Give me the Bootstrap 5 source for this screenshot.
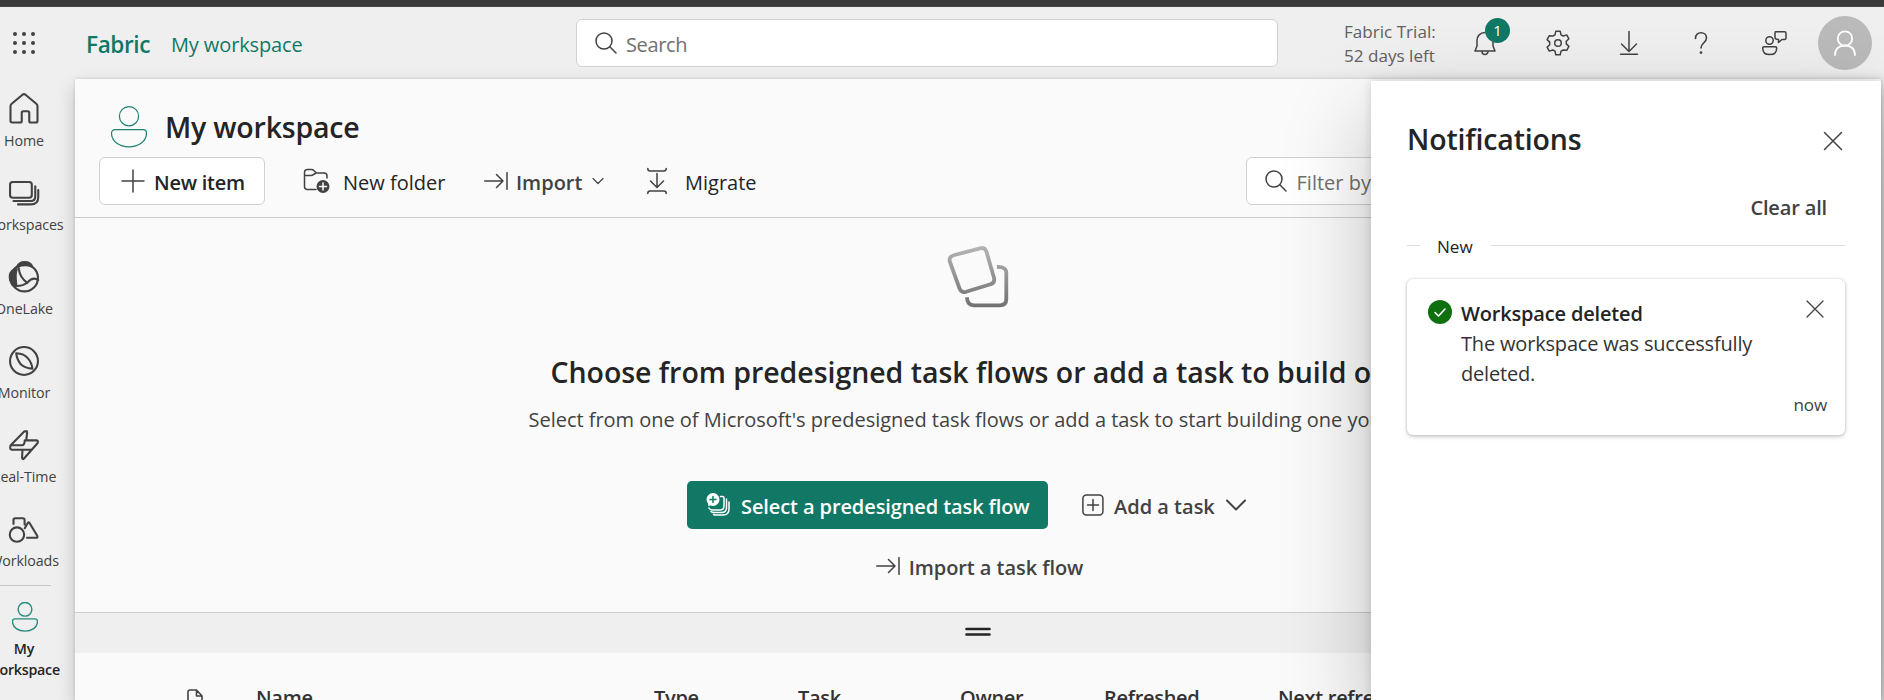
<!DOCTYPE html>
<html lang="en">
<head>
<meta charset="utf-8">
<title>My workspace - Fabric</title>
<link rel="stylesheet" href="https://cdn.jsdelivr.net/npm/bootstrap@5.3.0/dist/css/bootstrap.min.css">
<script src="https://cdn.jsdelivr.net/npm/bootstrap@5.3.0/dist/js/bootstrap.bundle.min.js"></script>
<style>
:root{--brand:#117865;--ink:#242424;--ink2:#424242;--line:#d1d1d1}
body{font-family:"Open Sans","Noto Sans",sans-serif;font-size:20px;line-height:30px;color:var(--ink);background:#efefef;height:700px;overflow:hidden;white-space:nowrap}
svg{display:block;flex:none;fill:none;stroke:var(--ink2);stroke-linecap:round;stroke-linejoin:round;overflow:visible}
.topline{height:7px;background:#3b3b3b;border-bottom:1px solid #484644}
.apphead{height:72px}
.semi{font-weight:600}
.teal{color:var(--brand)}
.waffle{width:48px;padding-left:13px}
.brand-name{margin-left:38px;width:85px;font-size:22.6px;letter-spacing:-.4px}
.crumb{letter-spacing:-.12px;width:405px}
.field{height:48px;background:#fff;border:1px solid var(--line);border-radius:6px;color:#707070}
.search{width:702px;padding-left:18px;letter-spacing:-.35px}
.trial{margin-left:66px;width:118px;font-size:17.1px;line-height:24px;color:#616161;padding-top:1px}
.tool{width:72px}
.count{left:25px;top:-12px;width:25px;height:25px;border-radius:50%;background:var(--brand);color:#fff;font-size:15px;line-height:25px}
.avatar{width:54px;height:54px;background:#bababa;margin-left:9px}
.side{width:75px}
.side-item{width:48px;height:84px;padding-top:12px;font-size:14.25px;line-height:21px;color:var(--ink2);letter-spacing:-.1px}
.side-item svg{margin-bottom:3px;stroke-width:1.4}
.side-rule{width:51px;height:1px;background:#c8c8c8;margin-top:2px}
.pane{background:#fafafa;margin-right:3px;box-shadow:0 0 3px rgba(0,0,0,.14),0 8px 18px rgba(0,0,0,.2)}
.title-row{height:78px;padding:27px 0 0 36px}
.title-text{font-size:28.5px;line-height:42px;letter-spacing:-.2px;margin:0 0 0 18px}
.tools{height:61px;padding:0 0 12px 24px;border-bottom:1px solid #cdcdcd}
.newitem{width:166px;height:48px;background:#fff;border:1px solid var(--line);border-radius:6px;padding-left:21px;letter-spacing:-.25px}
.filter{width:300px;margin-left:489px;padding-left:18px}
.drop{padding-top:3px}
.flow{height:395px;border-bottom:1px solid #cdcdcd}
.flow h2{font-size:28.5px;line-height:42px;letter-spacing:-.04px}
.sub{color:var(--ink2);letter-spacing:-.03px}
.cta{height:48px;width:361px;background:var(--brand);color:#fff;border-radius:5px;padding-left:19px;letter-spacing:-.1px}
.splitter{height:40px;background:#efefef}
.cols{height:60px;padding:30px 0 0 112px;color:#333;letter-spacing:-.3px}
.panel{left:1371px;top:81px;width:510px;height:619px;background:#fff;box-shadow:0 0 10px rgba(0,0,0,.14),0 36px 84px rgba(0,0,0,.24);padding:37px 36px 0}
.note{height:156px;border-radius:6px;background:#fff;box-shadow:0 0 3px rgba(0,0,0,.18),0 2px 4px rgba(0,0,0,.18);margin-top:20px;padding:20px 18px 0 21px}
.rule{height:1px;background:#dcdcdc}
.small-t{font-size:17.1px;line-height:24px}
</style>
</head>
<body class="position-relative">
<svg width="0" height="0" class="position-absolute" aria-hidden="true">
  <symbol id="person" viewBox="0 0 36 42"><circle cx="18" cy="10.2" r="9.6"/><path d="M4 23.6h28a3.5 3.5 0 0 1 3.500 3.500C35.500 36 27 40.800 18 40.800S.5 36 .5 27.100A3.500 3.500 0 0 1 4 23.600z"/></symbol>
  <symbol id="glass" viewBox="0 0 22 22"><circle cx="9" cy="9" r="8"/><path d="M14.800 14.800 21 21"/></symbol>
  <symbol id="import" viewBox="0 0 24 18"><path d="M.7 9H19M12.500 2.500 19 9l-6.500 6.500M23 .7v16.600"/></symbol>
</svg>
<div class="topline"></div>
<header class="apphead d-flex align-items-center">
  <div class="waffle"><svg width="24" height="24" style="fill:#424242;stroke:none"><g id="dots"><circle cx="2" cy="3" r="2"/><circle cx="11" cy="3" r="2"/><circle cx="20" cy="3" r="2"/></g><use href="#dots" y="9"/><use href="#dots" y="18"/></svg></div>
  <div class="brand-name semi teal pt-1">Fabric</div>
  <div class="crumb teal pt-1">My workspace</div>
  <div class="field search d-flex align-items-center"><svg width="22" height="22" stroke-width="1.500"><use href="#glass"/></svg><span class="ps-2 pt-1" style="margin-left:1px">Search</span></div>
  <div class="trial">Fabric Trial:<br>52 days left</div>
  <div class="tool position-relative" style="width:83px;padding-left:12px">
    <svg width="24" height="26" stroke-width="1.500"><path d="M11 2.500c-5 0-8 3.700-8 8v5.500L1 21h20l-2-5v-5M8 21.500a3 3 0 0 0 6 0"/></svg>
    <span class="count position-absolute text-center" style="left:23px">1</span>
  </div>
  <div class="tool"><svg width="26" height="26" viewBox="-13 -13 26 26" stroke-width="1.500"><circle r="3.300"/><path d="M-2.200-11.800h4.400l.8 3.600 2.200 1.200 3.500-1.100 2.200 3.900-2.600 2.500v2.600l2.600 2.500-2.200 3.900L5.200 7 3 8.200l-.8 3.600h-4.400L-3 8.200-5.200 7l-3.500 1.100-2.200-3.900 2.600-2.500v-2.600l-2.600-2.500 2.200-3.900L-5.200-7-3-8.200z"/></svg></div>
  <div class="tool"><svg width="24" height="24" stroke-width="1.500"><path d="M12 .5V20M4.500 13l7.500 7.500 7.500-7.500M3.500 23.300h17"/></svg></div>
  <div class="tool"><svg width="24" height="24" stroke-width="1.600"><path d="M6.500 7.500C6.500 3.500 9 1.800 12 1.800s5.500 2 5.500 5.200c0 4.500-5.500 5-5.500 10"/><circle cx="12" cy="21.600" r=".6"/></svg></div>
  <div class="tool" style="width:48px"><svg width="26" height="26" stroke-width="1.500"><circle cx="8.500" cy="10.500" r="3.700"/><path d="M3 16.800h11.500q1.200 0 1.200 1.200c0 4.500-3 6.600-7 6.600s-7-2.100-7-6.600q0-1.200 1.300-1.200zM14.500 1.800h9q1.500 0 1.500 1.500V8q0 1.500-1.500 1.500H21l-3.500 3v-3q-3.500 0-3.500-2V3.300q0-1.500.5-1.500z"/></svg></div>
  <div class="avatar rounded-circle d-flex align-items-center justify-content-center"><svg width="24" height="26" style="stroke:#fff" stroke-width="1.800"><circle cx="12" cy="8.500" r="7.200"/><path d="M2 25c0-6 4-9.500 10-9.500S22 19 22 25"/></svg></div>
</header>

<div class="d-flex" style="height:621px">
  <nav class="side flex-shrink-0">
    <div class="side-item d-flex flex-column align-items-center"><svg width="36" height="36" viewBox="0 0 24 24"><path d="M3 10.200Q3 9.200 3.800 8.500l7.200-6q1-.8 2 0l7.200 6q.8.700.8 1.700V20q0 1-1 1h-3.500q-1 0-1-1v-5.500q0-1-1-1h-3q-1 0-1 1V20q0 1-1 1H4q-1 0-1-1z"/></svg>Home</div>
    <div class="side-item d-flex flex-column align-items-center"><svg width="36" height="36" viewBox="0 0 24 24"><rect x="2.700" y="4.700" width="14.500" height="10.500" rx="1.800"/><path d="M5 17.300h11.500q3 0 3-3V7.500M8 19.600h8.500q5 0 5-5V10"/></svg>Workspaces</div>
    <div class="side-item d-flex flex-column align-items-center"><svg width="36" height="36" viewBox="0 0 24 24"><circle cx="12.300" cy="12.600" r="9"/><path d="M7.500 5.200Q8.500 2 12.500 2t5 3.200q-4-2-10 0zM6.500 6.500Q1.500 8.500 2.700 14q.8 3 3 4.500 1.500-1 1-3Q6 10 7.200 6.800z" fill="#424242"/><path d="M8.500 6c.3 4.500 3 8 5.800 10M7 18q4.500 0 7.500-2.500Q18 11.500 21.500 14"/></svg>OneLake</div>
    <div class="side-item d-flex flex-column align-items-center"><svg width="36" height="36" viewBox="0 0 24 24"><circle cx="12" cy="12" r="9.300"/><path d="M6.800 6.800q5.400.2 7.700 3.300 2.700 3 3.100 7.100-4.800-.5-7.600-2.900-2.700-3-3.200-7.500z"/></svg>Monitor</div>
    <div class="side-item d-flex flex-column align-items-center"><svg width="36" height="36" viewBox="0 0 24 24"><path d="M12.300 2.900 3 12.300q-.8 2.700 1 2.900h7l-.3 5.300q.3 1.500 1.300.5l9-10.200q.8-1.700-.7-1.900h-6.800l.6-5.300q-.2-1.300-.8-.7zM4 12.200h6.500q2 0 2-3.300M11 15.200h5.500"/></svg>Real-Time</div>
    <div class="side-item d-flex flex-column align-items-center"><svg width="36" height="36" viewBox="0 0 24 24"><circle cx="7.300" cy="15.700" r="4.800"/><path d="M5 8.700V6q0-1.200 1.200-1.200h5q1.200 0 1.200 1.200v3M12.500 11.500l2-3.500q.6-.9 1.200 0l5.200 8.700q.4 1.100-.8 1.100H14"/></svg>Workloads</div>
    <div class="side-rule"></div>
    <div class="side-item semi d-flex flex-column align-items-center text-center" style="padding-top:16px;color:#242424"><svg width="26" height="30" style="stroke:#2a8c7b;margin:0 0 6px 1px;stroke-width:2"><use href="#person"/></svg>My<br><span style="letter-spacing:-.25px">workspace</span></div>
  </nav>

  <main class="pane flex-grow-1 overflow-visible">
    <div class="title-row d-flex align-items-start"><svg width="36" height="42" style="stroke:#1d8170" stroke-width="1.200"><use href="#person"/></svg><h1 class="title-text semi">My workspace</h1></div>
    <div class="tools d-flex align-items-center">
      <div class="newitem semi d-flex align-items-center"><svg width="24" height="24" stroke-width="1.500"><path d="M12 1v22M1 12h22"/></svg><span class="drop" style="padding-left:9px">New item</span></div>
      <svg width="28" height="26" stroke-width="1.500" style="margin-left:38px"><path d="M13 21.500H4.500q-3 0-3-3v-14q0-3 3-3h4q1.500 0 2.500 1.200L13.500 5H21q3 0 3 3v2M1.500 7.500H8q1.500 0 2.500-1L13 5"/><circle cx="20" cy="18.500" r="6.500" fill="#424242" stroke="none"/><path d="M20 15v7M16.500 18.500h7" stroke="#fff"/></svg>
      <span class="drop" style="margin-left:12px;width:141px">New folder</span>
      <svg width="24" height="18" stroke-width="1.500"><use href="#import"/></svg>
      <span class="drop semi" style="margin-left:8px;width:76px;color:#424242">Import</span>
      <svg width="12" height="8" stroke-width="1.200"><path d="M1 1.500l5 5 5-5"/></svg>
      <svg width="20" height="26" stroke-width="1.500" style="margin-left:43px"><path d="M.8.5Q.8 3 3 3h14q2.200 0 2.200-2.500M.8 25.500Q.8 23 3 23h14q2.200 0 2.200 2.500M10 5.500V19M3.500 13l6.500 6.500 6.500-6.500"/></svg>
      <span class="drop" style="margin-left:18px">Migrate</span>
      <div class="field filter d-flex align-items-center flex-shrink-0"><svg width="22" height="22" stroke-width="1.500"><use href="#glass"/></svg><span class="drop" style="padding-left:10px">Filter by keyword</span></div>
    </div>
    <section class="flow d-flex flex-column align-items-center">
      <svg width="62" height="62" style="margin-top:28px" stroke-width="3.800" stroke="none"><defs><linearGradient id="g" x1="0" y1="0" x2="0" y2="62" gradientUnits="userSpaceOnUse"><stop stop-color="#b5b5b5"/><stop offset="1" stop-color="#707070"/></linearGradient></defs><g style="stroke:url(#g)"><path d="M7.500 9 33 2.300q5-1.300 6.500 3.500l7.500 26q1.200 5-3.500 6.500L19 45.800q-5 1.300-6.500-3.500L2.800 15.500Q1.500 10.500 7.500 9z"/><path d="M50 21q9.300-.5 9.300 6v26q0 6.300-6.300 6.300H27q-7 0-7-8" stroke-linecap="butt"/></g></svg>
      <h2 class="semi m-0" style="margin-top:43px!important">Choose from predesigned task flows or add a task to build one</h2>
      <div class="sub" style="margin-top:12px">Select from one of Microsoft's predesigned task flows or add a task to start building one yourself.</div>
      <div class="d-flex align-items-center" style="margin-top:46px;width:582px">
        <div class="cta semi d-flex align-items-center"><svg width="26" height="26" style="stroke:#fff" stroke-width="1.500"><path d="M14.500 4.500h2q1.500 0 1.500 1.500v8q0 4-4 4H6q-2 0-3-2M20.500 7v8.500q0 5-5 5H8q-2 0-3-1M23 10v7q0 6-6 6h-7q-1.500 0-2.500-.5M3 12v1.500"/><circle cx="7" cy="7.500" r="6.500" fill="#fff" stroke="none"/><path d="M7 4.500v6M4 7.500h6" stroke="#117865"/></svg><span class="drop" style="padding-left:9px">Select a predesigned task flow</span></div>
        <svg width="22" height="22" stroke-width="1.500" style="margin-left:34px"><rect x=".9" y=".9" width="20" height="20.200" rx="3.500"/><path d="M11 5.500v11M5.500 11h11"/></svg>
        <span class="semi drop" style="margin-left:10px;width:112px;color:#424242">Add a task</span>
        <svg width="20" height="12" stroke-width="2"><path d="M1 1.500l9 9 9-9"/></svg>
      </div>
      <div class="d-flex align-items-center" style="margin:21px 0 0 3px"><svg width="24" height="18" stroke-width="1.500" style="margin-top:-2px"><use href="#import"/></svg><span class="semi drop" style="margin-left:9px;color:#424242;letter-spacing:-.05px">Import a task flow</span></div>
    </section>
    <div class="splitter d-flex justify-content-center"><svg width="26" height="10" style="margin-top:14px;stroke:#242424" stroke-width="2.600"><path d="M1.500 2h23M1.500 7.500h23"/></svg></div>
    <div class="cols d-flex align-items-start semi overflow-hidden">
      <svg width="16" height="22" stroke-width="1.600" style="margin-top:6px"><path d="M3 1h6.500L15 7v12q0 2-2 2H3q-2 0-2-2V3q0-2 2-2zM9.500 1v6H15"/></svg>
      <span style="margin-left:53px;width:398px">Name</span><span style="width:144px">Type</span><span style="width:162px">Task</span><span style="width:144px">Owner</span><span style="width:174px">Refreshed</span><span>Next refresh</span>
    </div>
  </main>
</div>

<aside class="panel position-absolute">
  <div class="d-flex align-items-center justify-content-between" style="padding-right:3px"><h2 class="semi m-0" style="font-size:28.500px;line-height:42px;letter-spacing:-.15px">Notifications</h2><svg width="18" height="18" stroke-width="1.500" style="margin-top:4px"><path d="M.5.500l17 17M17.500.5l-17 17"/></svg></div>
  <div class="semi text-end" style="margin-top:33px;padding-right:18px;color:#424242;letter-spacing:-.15px">Clear all</div>
  <div class="d-flex align-items-center" style="margin-top:9px"><span class="rule" style="width:13px"></span><span class="small-t" style="padding:3px 18px 0 17px">New</span><span class="rule flex-grow-1"></span></div>
  <div class="note">
    <div class="d-flex align-items-start">
      <svg width="24" height="24" style="margin-top:1px"><circle cx="12" cy="12" r="12" fill="#0f7010" stroke="none"/><path d="M7 12.500l3.500 3.500L17 9" stroke="#fff" stroke-width="1.600"/></svg>
      <div class="flex-grow-1" style="margin-left:9px"><div class="semi" style="letter-spacing:-.17px">Workspace deleted</div><div style="letter-spacing:-.18px;color:#333">The workspace was successfully<br>deleted.</div></div>
      <svg width="18" height="18" stroke-width="1.300" style="margin:1px 3px 0 0"><path d="M1 1l16 16M17 1 1 17"/></svg>
    </div>
    <div class="small-t text-end" style="color:#424242;letter-spacing:-.2px;margin-top:4px">now</div>
  </div>
</aside>
</body>
</html>
